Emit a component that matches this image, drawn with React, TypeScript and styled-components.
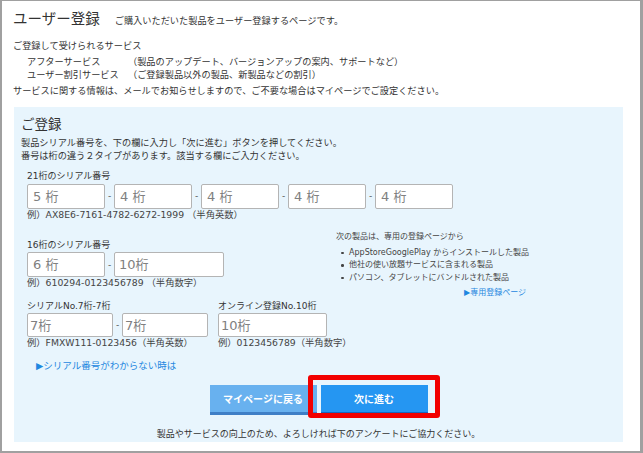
import styled, { createGlobalStyle } from "styled-components";

const FONT = `"DejaVu Sans", "Noto Sans CJK JP", sans-serif`;

const GlobalStyle = createGlobalStyle`
  html, body {
    margin: 0;
    padding: 0;
    background: #ffffff;
  }
  body {
    font-family: ${FONT};
    color: #333333;
  }
`;

const Frame = styled.div`
  width: 643px;
  height: 453px;
  box-sizing: border-box;
  border: 2px solid #a0a0a0;
  border-top-width: 1px;
  border-right-width: 3px;
  background: #ffffff;
  display: flex;
  flex-direction: column;
`;

const Header = styled.header`
  padding: 8px 0 0 11px;
`;

const TitleRow = styled.div`
  display: flex;
  align-items: baseline;
  gap: 15px;
  height: 20px;
`;

const Title = styled.h1`
  margin: 0;
  font-size: 14.5px;
  font-weight: 400;
  line-height: 20px;
  color: #333;
`;

const SubTitle = styled.span`
  font-size: 9.2px;
  line-height: 20px;
`;

const Line = styled.p<{ $top?: number }>`
  margin: ${(p) => p.$top ?? 0}px 0 0;
  font-size: 9.2px;
  line-height: 13px;
`;

const ServiceGrid = styled.div`
  display: grid;
  grid-template-columns: 101px auto;
  margin: 3px 0 0 14px;
  font-size: 9.2px;
  line-height: 13px;
`;

const Panel = styled.section`
  margin: 10px 17px 9px 12px;
  flex: 1;
  background: #e8f5fd;
  padding: 8px 0 0 7px;
  display: flex;
  flex-direction: column;
`;

const PanelTitle = styled.h2`
  margin: 0;
  font-size: 13.5px;
  font-weight: 400;
  line-height: 18px;
  color: #333;
`;

const Group = styled.div<{ $top: number; $indent?: number }>`
  margin-top: ${(p) => p.$top}px;
  padding-left: ${(p) => p.$indent ?? 6}px;
`;

const Label = styled.div`
  font-size: 9px;
  line-height: 12px;
  white-space: nowrap;
`;

const InputRow = styled.div`
  display: flex;
  align-items: center;
  margin-top: 1.5px;
`;

const Dash = styled.span`
  width: 9px;
  text-align: center;
  font-size: 9px;
  color: #555;
`;

const SerialInput = styled.input<{ $w: number; $h: number; $pad: number }>`
  box-sizing: border-box;
  width: ${(p) => p.$w}px;
  height: ${(p) => p.$h}px;
  padding: 0 0 0 ${(p) => p.$pad}px;
  margin: 0;
  border: 1px solid #b4b4b4;
  border-radius: 2px;
  background: #ffffff;
  font-family: ${FONT};
  font-size: 13px;
  outline: none;

  &::placeholder {
    color: #808080;
  }
`;

const Example = styled.div`
  font-size: 9.3px;
  line-height: 12px;
  color: #444;
  white-space: nowrap;
`;

const SplitRow = styled.div`
  display: flex;
  align-items: flex-start;
`;

const LeftColumn = styled.div`
  width: 315px;
  flex-shrink: 0;
`;

const PairRow = styled.div`
  display: flex;
  gap: 10px;
`;

const Note = styled.div`
  margin-top: 10px;
  font-size: 8px;
  line-height: 12px;
  color: #444;
  display: flex;
  flex-direction: column;
`;

const NoteList = styled.ul`
  list-style: none;
  margin: 4px 0 0;
  padding: 0;
`;

const NoteItem = styled.li`
  position: relative;
  padding-left: 13px;
  line-height: 12.5px;
  white-space: nowrap;

  &::before {
    content: "";
    position: absolute;
    left: 5px;
    top: 5px;
    width: 2.5px;
    height: 2.5px;
    border-radius: 50%;
    background: #444;
  }
`;

const Link = styled.a<{ $size: number }>`
  color: #1f87e0;
  font-size: ${(p) => p.$size}px;
  text-decoration: none;
  white-space: nowrap;
`;

const NoteLink = styled.div`
  margin-top: 2.5px;
  text-align: right;
  padding-right: 3px;
`;

const HelpLink = styled.div`
  margin: 8px 0 0 15px;
  line-height: 13px;
`;

const ButtonRow = styled.div`
  margin-top: 13px;
  display: flex;
  justify-content: center;
  gap: 4px;
  padding-right: 7px;
`;

const Button = styled.button<{ $primary?: boolean }>`
  position: relative;
  width: 107px;
  height: 30px;
  box-sizing: border-box;
  border: none;
  border-bottom: 3px solid ${(p) => (p.$primary ? "#1766bd" : "#3f7fc6")};
  background: ${(p) => (p.$primary ? "#2596f2" : "#68b1ef")};
  color: #ffffff;
  font-family: ${FONT};
  font-size: 10px;
  font-weight: 700;
  padding: 0;
  cursor: pointer;
`;

const Highlight = styled.span`
  position: absolute;
  left: -13px;
  right: -12px;
  top: -10px;
  bottom: -6px;
  border: 5px solid #f20000;
  border-radius: 3px;
  pointer-events: none;
`;

const Footer = styled.p`
  margin: 13px 0 0;
  padding-right: 7px;
  text-align: center;
  font-size: 9px;
  line-height: 13px;
`;

export default function App() {
  return (
    <>
      <GlobalStyle />
      <Frame>
        <Header>
          <TitleRow>
            <Title>ユーザー登録</Title>
            <SubTitle>ご購入いただいた製品をユーザー登録するページです。</SubTitle>
          </TitleRow>
          <Line $top={9.5}>ご登録して受けられるサービス</Line>
          <ServiceGrid>
            <span>アフターサービス</span>
            <span>（製品のアップデート、バージョンアップの案内、サポートなど）</span>
            <span>ユーザー割引サービス</span>
            <span>（ご登録製品以外の製品、新製品などの割引）</span>
          </ServiceGrid>
          <Line $top={3}>
            サービスに関する情報は、メールでお知らせしますので、ご不要な場合はマイページでご設定ください。
          </Line>
        </Header>

        <Panel>
          <PanelTitle>ご登録</PanelTitle>
          <Line $top={3.5}>
            製品シリアル番号を、下の欄に入力し「次に進む」ボタンを押してください。
          </Line>
          <Line>番号は桁の違う２タイプがあります。該当する欄にご入力ください。</Line>

          <Group $top={8}>
            <Label>21桁のシリアル番号</Label>
            <InputRow>
              <SerialInput $w={78} $h={25} $pad={5} placeholder="5 桁" />
              <Dash>-</Dash>
              <SerialInput $w={78} $h={25} $pad={5} placeholder="4 桁" />
              <Dash>-</Dash>
              <SerialInput $w={78} $h={25} $pad={5} placeholder="4 桁" />
              <Dash>-</Dash>
              <SerialInput $w={78} $h={25} $pad={5} placeholder="4 桁" />
              <Dash>-</Dash>
              <SerialInput $w={78} $h={25} $pad={5} placeholder="4 桁" />
            </InputRow>
            <Example>例）AX8E6-7161-4782-6272-1999 （半角英数）</Example>
          </Group>

          <SplitRow>
            <LeftColumn>
              <Group $top={18}>
                <Label>16桁のシリアル番号</Label>
                <InputRow>
                  <SerialInput $w={78} $h={25} $pad={5} placeholder="6 桁" />
                  <Dash>-</Dash>
                  <SerialInput $w={110} $h={25} $pad={4} placeholder="10桁" />
                </InputRow>
                <Example>例）610294-0123456789 （半角数字）</Example>
              </Group>

              <PairRow>
                <Group $top={10.5}>
                  <Label>シリアルNo.7桁-7桁</Label>
                  <InputRow>
                    <SerialInput $w={86} $h={24} $pad={2} placeholder="7桁" />
                    <Dash>-</Dash>
                    <SerialInput $w={86} $h={24} $pad={2} placeholder="7桁" />
                  </InputRow>
                  <Example>例）FMXW111-0123456（半角英数）</Example>
                </Group>
                <Group $top={10.5} $indent={0}>
                  <Label>オンライン登録No.10桁</Label>
                  <InputRow>
                    <SerialInput $w={109} $h={24} $pad={2} placeholder="10桁" />
                  </InputRow>
                  <Example>例）0123456789（半角数字）</Example>
                </Group>
              </PairRow>
            </LeftColumn>

            <Note>
              <div>次の製品は、専用の登録ページから</div>
              <NoteList>
                <NoteItem>AppStoreGooglePlay からインストールした製品</NoteItem>
                <NoteItem>他社の使い放題サービスに含まれる製品</NoteItem>
                <NoteItem>パソコン、タブレットにバンドルされた製品</NoteItem>
              </NoteList>
              <NoteLink>
                <Link $size={8} href="#">▶専用登録ページ</Link>
              </NoteLink>
            </Note>
          </SplitRow>

          <HelpLink>
            <Link $size={9.5} href="#">▶シリアル番号がわからない時は</Link>
          </HelpLink>

          <ButtonRow>
            <Button>マイページに戻る</Button>
            <Button $primary>
              次に進む
              <Highlight />
            </Button>
          </ButtonRow>

          <Footer>製品やサービスの向上のため、よろしければ下のアンケートにご協力ください。</Footer>
        </Panel>
      </Frame>
    </>
  );
}
